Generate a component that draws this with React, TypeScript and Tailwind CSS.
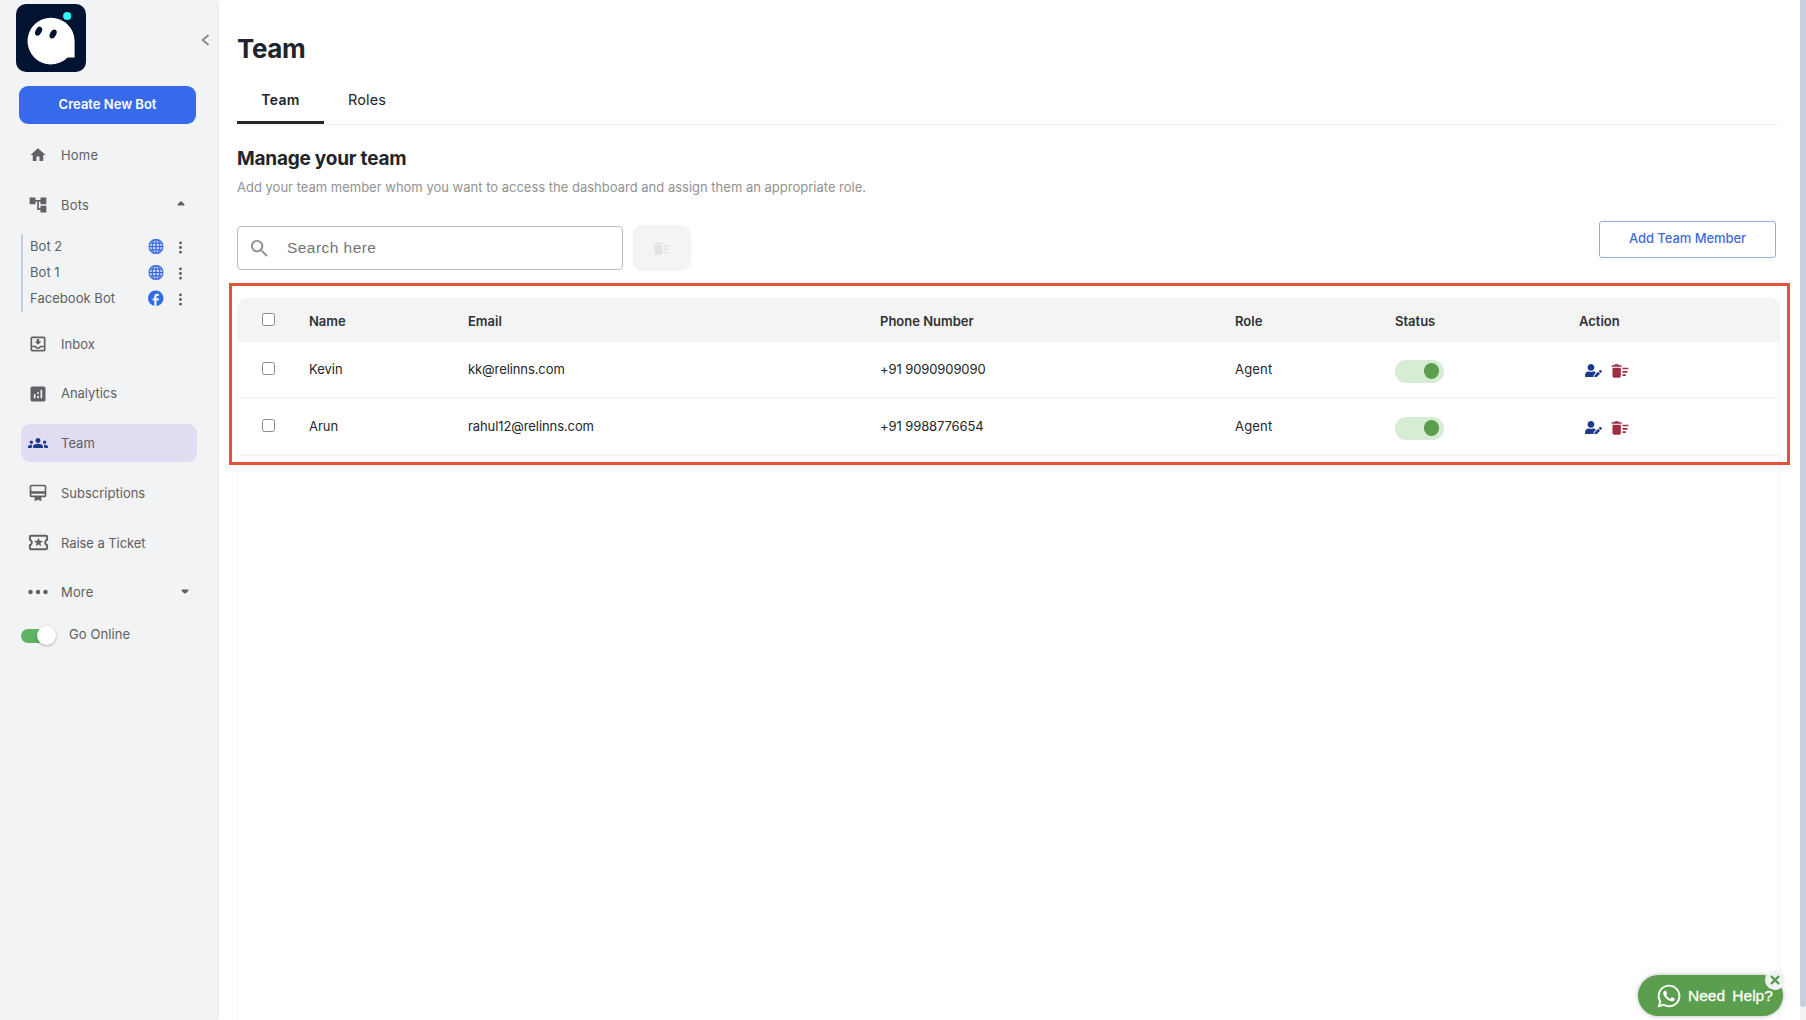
import React from "react";
import {
  MdHome,
  MdAccountTree,
  MdOutlineMoveToInbox,
  MdAnalytics,
  MdGroups,
  MdOutlineCardMembership,
  MdOutlineLocalActivity,
  MdDeleteSweep,
  MdFacebook,
  MdSearch,
} from "react-icons/md";
import { BsThreeDots, BsThreeDotsVertical, BsGlobe } from "react-icons/bs";
import { FaUserEdit, FaWhatsapp } from "react-icons/fa";

function Logo() {
  return (
    <svg className="h-[68px] w-[70px]" viewBox="0 0 70 68">
      <rect width="70" height="68" rx="10" fill="#021331" />
      <path d="M35 13.8A23.3 23.3 0 0 1 58.6 37V53.4H51.5A23.3 23.3 0 1 1 35 13.8Z" fill="#fff" />
      <ellipse cx="22.6" cy="27.2" rx="3" ry="4.8" transform="rotate(28 22.6 27.2)" fill="#021331" />
      <ellipse cx="37.1" cy="30" rx="3" ry="4.8" transform="rotate(28 37.1 30)" fill="#021331" />
      <circle cx="51.2" cy="12" r="4.1" fill="#2ff5f7" />
    </svg>
  );
}

function Caret({ className = "" }: { className?: string }) {
  return (
    <svg className={`h-[5px] w-[8px] ${className}`} viewBox="0 0 8 5">
      <path d="M4 .2C4.6.2 7.6 3 7.6 3.9c0 .4-.3.7-.8.7H1.200C.7 4.600.4 4.300.4 3.900.4 3 3.400.2 4 .2Z" fill="#606164" />
    </svg>
  );
}

type NavProps = {
  icon: React.ReactNode;
  label: string;
  spacing: string;
  active?: boolean;
  children?: React.ReactNode;
};

function NavItem({ icon, label, spacing, active, children }: NavProps) {
  return (
    <div
      className={`ml-[21px] flex h-[38px] w-[176px] items-center rounded-[9px] pl-[5px] ${
        active ? "bg-[#e2dcf2]" : ""
      }`}
    >
      <span className={`flex w-6 justify-center ${active ? "text-[#1d398c]" : "text-[#606164]"}`}>{icon}</span>
      <span className={`ml-[11px] pt-px ${spacing}`}>{label}</span>
      {children}
    </div>
  );
}

function BotRow({ name, icon }: { name: string; icon: React.ReactNode }) {
  return (
    <div className="flex h-[26px] items-center pl-[7px]">
      <span className="w-[116px] tracking-[0.04px]">{name}</span>
      <span className="flex w-5 -translate-x-[0.5px] justify-center pb-[2px] text-[#3769e3]">{icon}</span>
      <span className="ml-[5px] flex w-[18px] justify-center text-[#55575a]">
        <BsThreeDotsVertical size={15} />
      </span>
    </div>
  );
}

function Sidebar() {
  return (
    <aside className="z-10 w-[217px] shrink-0 bg-[#f2f3f5] text-[13px] text-[#5e5f61] shadow-[0_0_4px_rgba(0,0,0,0.2)]">
      <div className="flex h-[86px] items-start justify-between pt-1 pr-[7px] pl-4">
        <Logo />
        <svg className="mt-[30px] h-[12px] w-[9px]" viewBox="0 0 9 12" fill="none">
          <path d="M7.500 1 1.700 6l5.800 5" stroke="#858688" strokeWidth="1.700" />
        </svg>
      </div>
      <button className="ml-[19px] flex h-[38px] w-[177px] items-center justify-center rounded-[9px] bg-[#3769eb] font-semibold text-white">
        Create New Bot
      </button>
      <nav className="pt-3">
        <NavItem icon={<MdHome size={18} />} label="Home" spacing="tracking-[0.2px]" />
        <div className="h-3" />
        <NavItem icon={<MdAccountTree size={20} />} label="Bots" spacing="tracking-[0.2px]">
          <Caret className="-mt-[3px] mr-[12px] ml-auto" />
        </NavItem>
        <div className="mt-[10px] mb-[13px] ml-[21px] w-[180px] border-l-2 border-[#c3cee3]">
          <BotRow name="Bot 2" icon={<BsGlobe size={15} strokeWidth={0.5} />} />
          <BotRow name="Bot 1" icon={<BsGlobe size={15} strokeWidth={0.5} />} />
          <BotRow name="Facebook Bot" icon={<MdFacebook size={18.5} color="#326be8" />} />
        </div>
        <div className="flex flex-col gap-[11.7px]">
          <NavItem icon={<MdOutlineMoveToInbox size={20} />} label="Inbox" spacing="tracking-normal" />
          <NavItem icon={<MdAnalytics size={20} />} label="Analytics" spacing="tracking-[-0.04px]" />
          <NavItem icon={<MdGroups size={20} />} label="Team" spacing="tracking-normal" active />
          <NavItem icon={<MdOutlineCardMembership size={20} />} label="Subscriptions" spacing="tracking-normal" />
          <NavItem icon={<MdOutlineLocalActivity size={23} />} label="Raise a Ticket" spacing="tracking-[-0.07px]" />
          <NavItem icon={<BsThreeDots size={24} />} label="More" spacing="tracking-[0.15px]">
            <Caret className="-mt-[2px] mr-[8px] ml-auto rotate-180" />
          </NavItem>
        </div>
        <div className="mt-[14px] ml-[21px] flex h-5 items-center">
          <div className="mt-px flex h-[14px] w-[33px] items-center justify-end rounded-full bg-[#5eb563]">
            <div className="-mr-[2px] size-[19px] shrink-0 rounded-full bg-white shadow-[0_1px_3px_rgba(0,0,0,0.3)]" />
          </div>
          <span className="-mt-px ml-[15px] tracking-[0.1px]">Go Online</span>
        </div>
      </nav>
    </aside>
  );
}

const members = [
  { name: "Kevin", email: "kk@relinns.com", phone: "+91 9090909090", role: "Agent" },
  { name: "Arun", email: "rahul12@relinns.com", phone: "+91 9988776654", role: "Agent" },
];

const columns = "grid grid-cols-[72px_159px_412px_355px_160px_184px_1fr] items-center";

function Checkbox() {
  return (
    <span className="-mt-[4px] ml-[25px] block size-[13px] rounded-[2.5px] border border-[#8b8b8d] bg-white" />
  );
}

function TeamTable() {
  return (
    <section className="relative mt-[27px] w-[1543px] grow text-[13px]">
      <div className={`${columns} h-[44px] rounded-t-[10px] bg-[#f4f4f4] pt-[3px] font-semibold text-[#303235]`}>
        <Checkbox />
        <span>Name</span>
        <span>Email</span>
        <span>Phone Number</span>
        <span>Role</span>
        <span>Status</span>
        <span>Action</span>
      </div>
      <div className="h-[678px] border-x border-[#f6f6f6] text-[#242629]">
        {members.map((m) => (
          <div key={m.name} className={`${columns} -mx-px h-[57px] border-b-2 border-[#f5f5f5] pt-px`}>
            <Checkbox />
            <span>{m.name}</span>
            <span className="tracking-[-0.09px]">{m.email}</span>
            <span className="tracking-[-0.1px]">{m.phone}</span>
            <span className="tracking-[0.2px]">{m.role}</span>
            <span className="mt-[2px] flex h-[23px] w-[49px] items-center justify-end rounded-full bg-[#d6edd5] pr-[5px]">
              <span className="size-[15.5px] rounded-full bg-[#5a9e4e]" />
            </span>
            <span className="mt-px flex items-center gap-[8px] pl-[5.500px]">
              <FaUserEdit className="h-[13.500px] w-[17px] text-[#1d398c]" />
              <MdDeleteSweep size={20} className="text-[#9c3041]" />
            </span>
          </div>
        ))}
      </div>
      <div className="pointer-events-none absolute -top-[15px] -left-[8px] h-[182px] w-[1561px] border-3 border-[#e4523a]" />
    </section>
  );
}

export default function App() {
  return (
    <div className="flex h-[1020px] w-[1806px] overflow-hidden bg-white font-['Inter',sans-serif] text-[#212429]">
      <Sidebar />
      <main className="flex min-w-0 grow flex-col pt-8 pl-5">
        <h1 className="h-[33px] text-[26px] leading-[33px] font-bold tracking-[-0.35px]">Team</h1>
        <div className="mt-[11px] flex h-[49px] w-[1543px] border-b border-[#f3f3f3] text-[14px]">
          <div className="relative flex w-[87px] items-center justify-center pb-px font-semibold tracking-[0.3px]">
            Team
            <span className="absolute inset-x-0 bottom-0 h-[3px] bg-[#26282b]" />
          </div>
          <div className="flex items-center pl-6 text-[14.5px] tracking-[0.1px]">Roles</div>
        </div>
        <h2 className="mt-[22px] h-6 text-[19px] leading-6 font-bold tracking-[-0.22px]">Manage your team</h2>
        <p className="mt-[6px] h-5 text-[13px] leading-5 text-[#929292]">
          Add your team member whom you want to access the dashboard and assign them an appropriate role.
        </p>
        <div className="mt-[28px] flex h-[46px] w-[1539px] items-center">
          <div className="flex h-[44px] w-[386px] items-center rounded-[4px] border border-[#bcbcbc] pl-[10px] text-[#8d8d8d]">
            <MdSearch size={23} />
            <span className="ml-[16px] font-['Liberation_Sans',sans-serif] text-[15.5px] tracking-[0.45px] text-[#757575]">
              Search here
            </span>
          </div>
          <div className="ml-[10px] flex h-[46px] w-[58px] items-center justify-center rounded-[10px] bg-[#f4f4f4] pr-[2px] text-[#e2e2e2]">
            <MdDeleteSweep size={19} />
          </div>
          <button className="-mt-[18px] ml-auto flex h-[37px] w-[177px] items-center justify-center rounded-[3px] border border-[#93aee6] pb-px text-[13px] font-medium tracking-[-0.06px] text-[#3f6cdb]">
            Add Team Member
          </button>
        </div>
        <TeamTable />
      </main>
      <div className="w-[6.500px] shrink-0 bg-[#f2f2f2]">
        <div className="h-[1007px] rounded-b-[4px] bg-[#c7cfdf]" />
      </div>
      <div className="absolute top-[975px] left-[1638px] z-20 flex h-[41px] w-[145px] items-center rounded-full bg-[#5a9e4e] pl-[18px] text-white shadow-[0_0_4px_rgba(0,0,0,0.3)]">
        <FaWhatsapp size={26} />
        <span className="ml-[6px] pt-px font-['Liberation_Sans',sans-serif] text-[15.5px] tracking-normal whitespace-nowrap [word-spacing:3px] [-webkit-text-stroke:0.3px_white]">
          Need Help?
        </span>
        <span className="absolute -top-[5px] right-[-2px] flex size-5 items-center justify-center rounded-full bg-[#f0f2f1]">
          <svg className="size-[10px]" viewBox="0 0 10 10">
            <path d="M1 1l8 8M9 1 1 9" stroke="#4f9648" strokeWidth="2.200" />
          </svg>
        </span>
      </div>
    </div>
  );
}
